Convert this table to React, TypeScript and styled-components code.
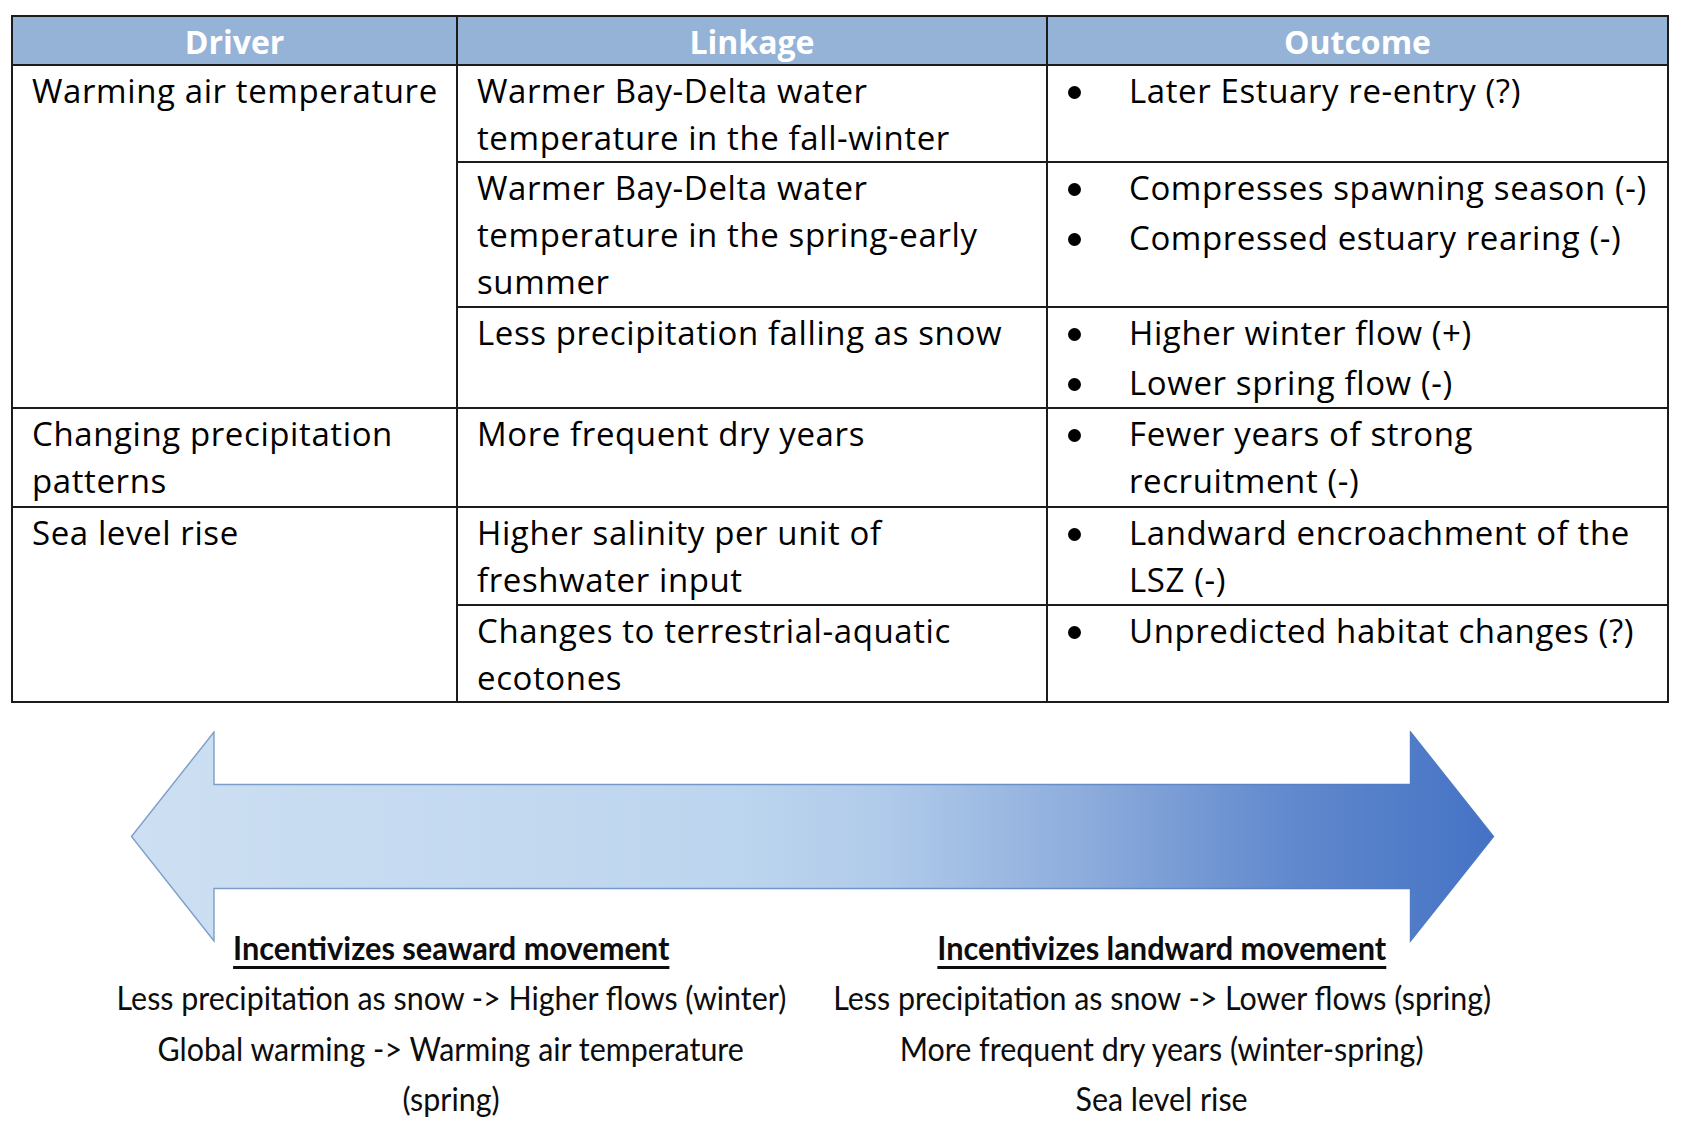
import React from "react";
import styled, { createGlobalStyle } from "styled-components";

const Global = createGlobalStyle`
  html, body { margin: 0; padding: 0; background: #ffffff; }
  body { font-family: "Open Sans", "Noto Sans", "Liberation Sans", sans-serif; color: #000; }
  * { box-sizing: border-box; }
`;

const Page = styled.div`
  width: 1686px;
  height: 1144px;
  padding: 15px 0 0 11px;
  overflow: hidden;
`;

const Table = styled.table`
  border-collapse: separate;
  border-spacing: 0;
  table-layout: fixed;
  width: 1658px;
  border-left: 2px solid #1c1c1c;
  border-top: 2px solid #1c1c1c;
`;

const HeadCell = styled.th`
  background: #95b3d7;
  color: #ffffff;
  font-weight: 700;
  font-size: 32px;
  line-height: 45px;
  height: 49px;
  padding: 2px 0 0 0;
  text-align: center;
  border-right: 2px solid #1c1c1c;
  border-bottom: 2px solid #1c1c1c;
`;

const Row = styled.tr<{ $h: number }>`
  height: ${(p) => p.$h}px;
`;

const Cell = styled.td`
  vertical-align: top;
  font-size: 33px;
  letter-spacing: 0.6px;
  line-height: 47px;
  padding: 1px 0 0 19px;
  border-right: 2px solid #1c1c1c;
  border-bottom: 2px solid #1c1c1c;
`;

const OutcomeCell = styled(Cell)`
  padding-left: 20px;
`;

const Line = styled.span`
  display: block;
  white-space: nowrap;
`;

const BulletList = styled.ul`
  list-style: none;
  margin: 0;
  padding: 0;
  display: flex;
  flex-direction: column;
  gap: 3px;
`;

const BulletItem = styled.li`
  display: grid;
  grid-template-columns: 61px 1fr;
  &::before {
    content: "";
    width: 13px;
    height: 13px;
    border-radius: 50%;
    background: #000;
    margin-top: 19px;
  }
`;

const ArrowWrap = styled.div`
  margin: 28px 0 0 109px;
  width: 1386px;
  height: 212px;
`;

const Captions = styled.div`
  display: flex;
  gap: 11px;
  margin: -20px 0 0 90px;
`;

const CaptionColumn = styled.div`
  width: 700px;
  display: flex;
  flex-direction: column;
  align-items: center;
`;

const CaptionLine = styled.div<{ $scale: number; $bold?: boolean }>`
  white-space: nowrap;
  font-family: Lato, "Open Sans", sans-serif;
  font-size: 32px;
  line-height: 50.4px;
  font-weight: ${(p) => (p.$bold ? 700 : 400)};
  color: #0d0d0d;
  transform: scaleX(${(p) => p.$scale});
  transform-origin: center;
  text-decoration: ${(p) => (p.$bold ? "underline" : "none")};
  text-decoration-thickness: 3px;
  text-underline-offset: 6px;
`;

type RowData = {
  h: number;
  driver?: { lines: string[]; span: number };
  link: string[];
  out: string[][];
};

const rows: RowData[] = [
  {
    h: 97,
    driver: { lines: ["Warming air temperature"], span: 3 },
    link: ["Warmer Bay-Delta water", "temperature in the fall-winter"],
    out: [["Later Estuary re-entry (?)"]],
  },
  {
    h: 145,
    link: ["Warmer Bay-Delta water", "temperature in the spring-early", "summer"],
    out: [["Compresses spawning season (-)"], ["Compressed estuary rearing (-)"]],
  },
  {
    h: 101,
    link: ["Less precipitation falling as snow"],
    out: [["Higher winter flow (+)"], ["Lower spring flow (-)"]],
  },
  {
    h: 99,
    driver: { lines: ["Changing precipitation", "patterns"], span: 1 },
    link: ["More frequent dry years"],
    out: [["Fewer years of strong", "recruitment (-)"]],
  },
  {
    h: 98,
    driver: { lines: ["Sea level rise"], span: 2 },
    link: ["Higher salinity per unit of", "freshwater input"],
    out: [["Landward encroachment of the", "LSZ (-)"]],
  },
  {
    h: 97,
    link: ["Changes to terrestrial-aquatic", "ecotones"],
    out: [["Unpredicted habitat changes (?)"]],
  },
];

const Lines = ({ lines }: { lines: string[] }) => (
  <>
    {lines.map((l, i) => (
      <Line key={i}>{l}</Line>
    ))}
  </>
);

const Arrow = () => (
  <ArrowWrap>
    <svg width="1386" height="212" viewBox="0 0 1386 212">
      <defs>
        <linearGradient id="fillGrad" x1="11" y1="0" x2="1375" y2="0" gradientUnits="userSpaceOnUse">
          <stop offset="0" stopColor="#cddff2" />
          <stop offset="0.45" stopColor="#bcd5ee" />
          <stop offset="0.55" stopColor="#b0cbea" />
          <stop offset="0.7" stopColor="#8dacdc" />
          <stop offset="0.85" stopColor="#6189cd" />
          <stop offset="1" stopColor="#4472c4" />
        </linearGradient>
        <linearGradient id="strokeGrad" x1="11" y1="0" x2="1375" y2="0" gradientUnits="userSpaceOnUse">
          <stop offset="0" stopColor="#7d9fc9" />
          <stop offset="0.6" stopColor="#6f93c6" />
          <stop offset="1" stopColor="#4a76c4" />
        </linearGradient>
      </defs>
      <polygon
        points="11.5,105.5 94,1 94,53.5 1290.5,53.5 1290.5,1 1373.5,105.5 1290.5,210 1290.5,157.5 94,157.5 94,210"
        fill="url(#fillGrad)"
        stroke="url(#strokeGrad)"
        strokeWidth="1.4"
        strokeLinejoin="miter"
      />
    </svg>
  </ArrowWrap>
);

export default function App() {
  return (
    <Page>
      <Global />
      <Table>
        <colgroup>
          <col style={{ width: 445 }} />
          <col style={{ width: 590 }} />
          <col style={{ width: 621 }} />
        </colgroup>
        <thead>
          <tr>
            <HeadCell>Driver</HeadCell>
            <HeadCell>Linkage</HeadCell>
            <HeadCell>Outcome</HeadCell>
          </tr>
        </thead>
        <tbody>
          {rows.map((r, i) => (
            <Row key={i} $h={r.h}>
              {r.driver && (
                <Cell rowSpan={r.driver.span}>
                  <Lines lines={r.driver.lines} />
                </Cell>
              )}
              <Cell>
                <Lines lines={r.link} />
              </Cell>
              <OutcomeCell>
                <BulletList>
                  {r.out.map((item, j) => (
                    <BulletItem key={j}>
                      <div>
                        <Lines lines={item} />
                      </div>
                    </BulletItem>
                  ))}
                </BulletList>
              </OutcomeCell>
            </Row>
          ))}
        </tbody>
      </Table>
      <Arrow />
      <Captions>
        <CaptionColumn>
          <CaptionLine $bold $scale={0.96}>Incentivizes seaward movement</CaptionLine>
          <CaptionLine $scale={0.95}>Less precipitation as snow -&gt; Higher flows (winter)</CaptionLine>
          <CaptionLine $scale={0.95}>Global warming -&gt; Warming air temperature</CaptionLine>
          <CaptionLine $scale={0.95}>(spring)</CaptionLine>
        </CaptionColumn>
        <CaptionColumn>
          <CaptionLine $bold $scale={0.96}>Incentivizes landward movement</CaptionLine>
          <CaptionLine $scale={0.95}>Less precipitation as snow -&gt; Lower flows (spring)</CaptionLine>
          <CaptionLine $scale={0.95}>More frequent dry years (winter-spring)</CaptionLine>
          <CaptionLine $scale={0.95}>Sea level rise</CaptionLine>
        </CaptionColumn>
      </Captions>
    </Page>
  );
}
